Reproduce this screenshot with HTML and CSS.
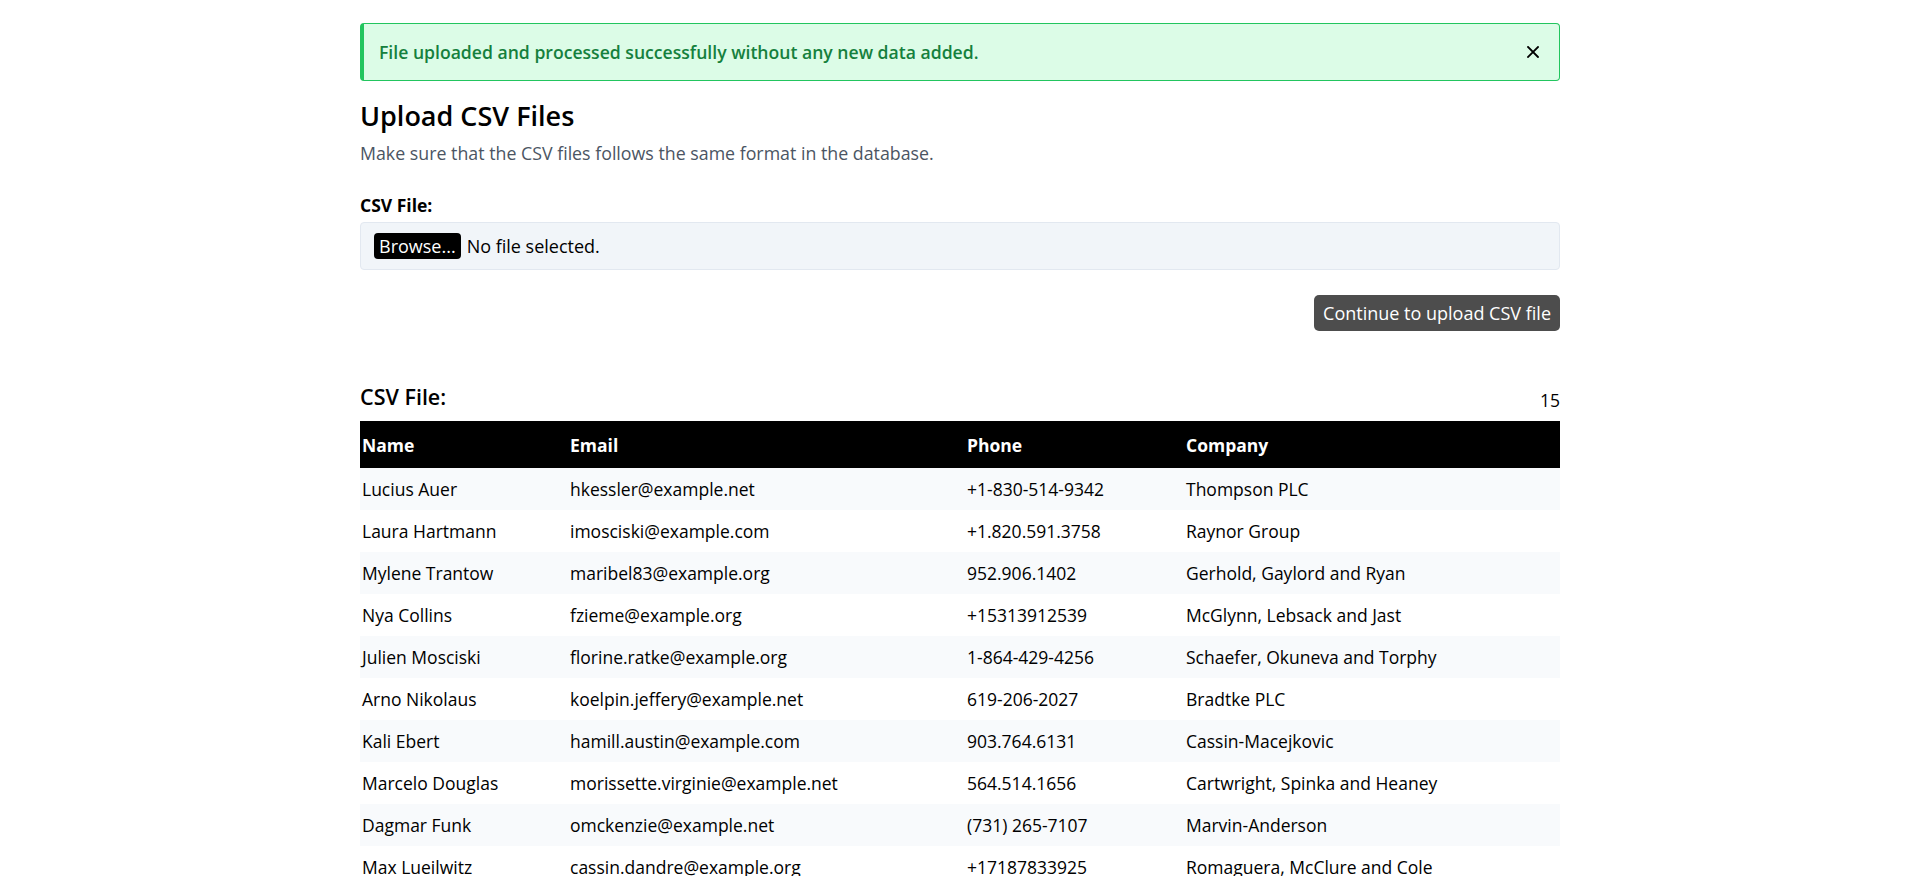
FILE: index.html
```html
<!DOCTYPE html>
<html lang="en">
<head>
<meta charset="utf-8">
<title>Upload CSV Files</title>
<link rel="stylesheet" href="styles.css">
</head>
<body>
<main class="container">
  <div class="alert">
    <span class="alert-text">File uploaded and processed successfully without any new data added.</span>
    <button class="alert-close" type="button" aria-label="Close">
      <svg width="12" height="12" viewBox="0 0 12 12"><path d="M1 1L11 11M11 1L1 11" stroke="#000" stroke-width="1.8" stroke-linecap="square"/></svg>
    </button>
  </div>

  <h1 class="title">Upload CSV Files</h1>
  <p class="subtitle">Make sure that the CSV files follows the same format in the database.</p>

  <form class="upload-form">
    <label class="field-label">CSV File:</label>
    <div class="file-box">
      <span class="browse-btn">Browse...</span>
      <span class="file-name">No file selected.</span>
    </div>
    <div class="form-actions">
      <button class="submit-btn" type="button">Continue to upload CSV file</button>
    </div>
  </form>

  <section class="preview">
    <div class="preview-head">
      <h2 class="preview-title">CSV File:</h2>
      <span class="preview-count">15</span>
    </div>
    <table class="data-table">
      <colgroup>
        <col class="c-name"><col class="c-email"><col class="c-phone"><col class="c-company">
      </colgroup>
      <thead>
        <tr><th>Name</th><th>Email</th><th>Phone</th><th>Company</th></tr>
      </thead>
      <tbody>
        <tr><td>Lucius Auer</td><td>hkessler@example.net</td><td>+1-830-514-9342</td><td>Thompson PLC</td></tr>
        <tr><td>Laura Hartmann</td><td>imosciski@example.com</td><td>+1.820.591.3758</td><td>Raynor Group</td></tr>
        <tr><td>Mylene Trantow</td><td>maribel83@example.org</td><td>952.906.1402</td><td>Gerhold, Gaylord and Ryan</td></tr>
        <tr><td>Nya Collins</td><td>fzieme@example.org</td><td>+15313912539</td><td>McGlynn, Lebsack and Jast</td></tr>
        <tr><td>Julien Mosciski</td><td>florine.ratke@example.org</td><td>1-864-429-4256</td><td>Schaefer, Okuneva and Torphy</td></tr>
        <tr><td>Arno Nikolaus</td><td>koelpin.jeffery@example.net</td><td>619-206-2027</td><td>Bradtke PLC</td></tr>
        <tr><td>Kali Ebert</td><td>hamill.austin@example.com</td><td>903.764.6131</td><td>Cassin-Macejkovic</td></tr>
        <tr><td>Marcelo Douglas</td><td>morissette.virginie@example.net</td><td>564.514.1656</td><td>Cartwright, Spinka and Heaney</td></tr>
        <tr><td>Dagmar Funk</td><td>omckenzie@example.net</td><td>(731) 265-7107</td><td>Marvin-Anderson</td></tr>
        <tr><td>Max Lueilwitz</td><td>cassin.dandre@example.org</td><td>+17187833925</td><td>Romaguera, McClure and Cole</td></tr>
        <tr><td>Elena Stracke</td><td>wkuhn@example.com</td><td>(402) 318-5561</td><td>Kuhlman Inc</td></tr>
        <tr><td>Tobin Wisoky</td><td>gottlieb.ora@example.net</td><td>+1-541-902-1184</td><td>Hettinger LLC</td></tr>
        <tr><td>Ruth Bechtelar</td><td>lwalsh@example.org</td><td>785.220.4419</td><td>Schmitt-Kozey</td></tr>
        <tr><td>Dion Hagenes</td><td>jerde.milo@example.com</td><td>1-320-776-0093</td><td>Rempel, Ward and Bins</td></tr>
        <tr><td>Iva Kertzmann</td><td>sporer.anya@example.net</td><td>+16295540172</td><td>Fadel Group</td></tr>
      </tbody>
    </table>
  </section>
</main>
</body>
</html>
```

FILE: styles.css
```css
html {
  scrollbar-width: none;
}
html::-webkit-scrollbar {
  display: none;
}
body {
  margin: 0;
  background: #fff;
  color: #000;
  font-family: "Open Sans", "Noto Sans", sans-serif;
  font-size: 17.5px;
}
.container {
  width: 1200px;
  margin: 0 auto;
  padding: 23px 0 40px;
}
.alert {
  display: flex;
  align-items: center;
  justify-content: space-between;
  background: #dcfce7;
  border: 1px solid #22c55e;
  border-left: 4px solid #22c55e;
  border-radius: 4px;
  padding: 16px 20px 16px 15px;
  line-height: 24px;
}
.alert-text {
  color: #15803d;
  font-weight: 600;
  font-size: 17.6px;
}
.alert-close {
  display: flex;
  border: 0;
  background: none;
  padding: 0;
  cursor: pointer;
}
.title {
  margin: 17px 0 4px;
  font-size: 27px;
  line-height: 36px;
  font-weight: 600;
}
.subtitle {
  margin: 0;
  font-size: 17.8px;
  line-height: 30px;
  color: #4b5563;
}
.upload-form {
  margin-top: 25px;
}
.field-label {
  display: block;
  font-weight: 700;
  font-size: 17.5px;
  line-height: 24px;
}
.file-box {
  display: flex;
  align-items: center;
  gap: 6px;
  height: 46px;
  margin-top: 5px;
  padding: 0 13px;
  background: #f1f5f9;
  border: 1px solid #e2e8f0;
  border-radius: 4px;
  font-size: 18px;
}
.browse-btn {
  background: #000;
  color: #fff;
  border-radius: 4px;
  padding: 0 5px;
  line-height: 26px;
}
.form-actions {
  display: flex;
  justify-content: flex-end;
  margin-top: 25px;
}
.submit-btn {
  background: #4d4d4d;
  color: #fff;
  border: 0;
  border-radius: 5px;
  height: 36px;
  padding: 0 9px;
  font: inherit;
  font-size: 18px;
}
.preview {
  margin-top: 51px;
}
.preview-head {
  display: flex;
  align-items: flex-end;
  justify-content: space-between;
}
.preview-title {
  margin: 0;
  font-size: 21.5px;
  line-height: 30px;
  font-weight: 600;
}
.preview-count {
  font-size: 17.5px;
  line-height: 24px;
}
.data-table {
  width: 100%;
  margin-top: 9px;
  border-collapse: collapse;
  table-layout: fixed;
  font-size: 17.5px;
}
.c-name { width: 208px; }
.c-email { width: 397px; }
.c-phone { width: 219px; }
.data-table th {
  background: #000;
  color: #fff;
  text-align: left;
  font-weight: 700;
  height: 47px;
  padding: 0 2px;
}
.data-table td {
  height: 42px;
  padding: 0 2px;
}
.data-table tbody tr:nth-child(odd) td {
  background: #f8fafc;
}
```
